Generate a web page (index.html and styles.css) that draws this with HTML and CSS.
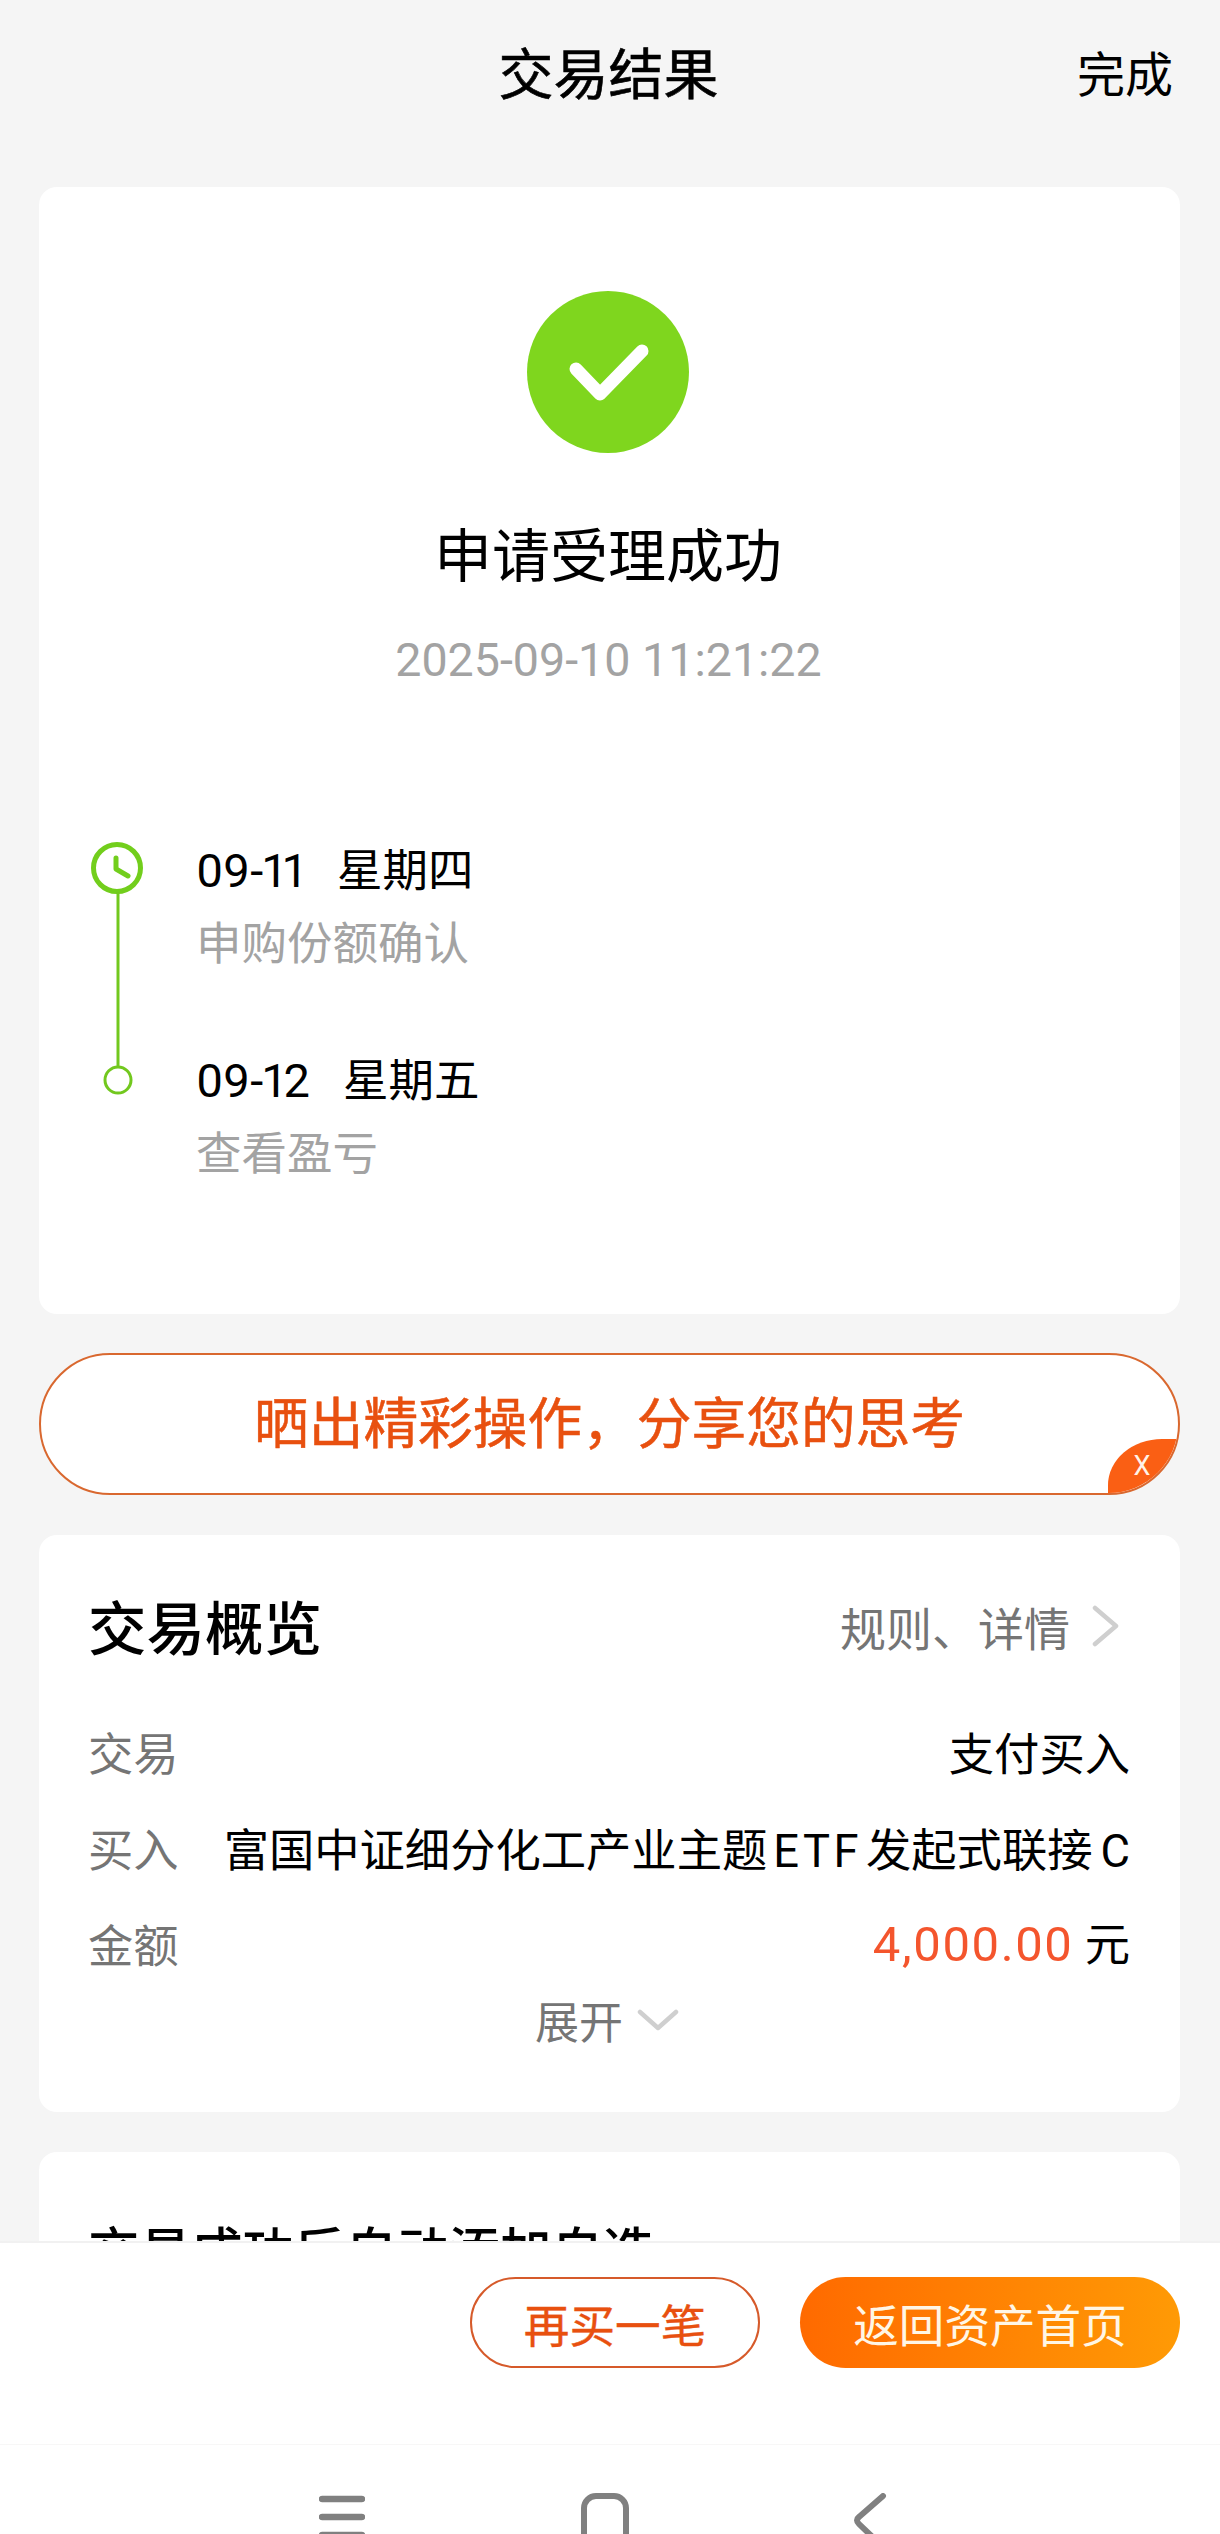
FILE: index.html
```html
<!DOCTYPE html>
<html lang="zh-CN">
<head>
    <meta charset="UTF-8">
    <title>交易结果</title>
    <link rel="stylesheet" href="styles.css">
</head>
<body>
    <div class="page">
        <header class="topbar">
            <span></span>
            <h1 class="topbar-title">交易结果</h1>
            <a class="topbar-done">完成</a>
        </header>

        <main class="content">
            <section class="card result">
                <svg class="result-icon" viewBox="0 0 162 162">
                    <circle cx="81" cy="81" r="81" fill="#7fd61e"/>
                    <path d="M49 78 L73 103 L115 60" fill="none" stroke="#fff" stroke-width="13" stroke-linecap="round" stroke-linejoin="round"/>
                </svg>
                <div class="result-title">申请受理成功</div>
                <div class="result-time">2025-09-10 11:21:22</div>

                <div class="timeline">
                    <svg class="timeline-rail" viewBox="0 0 56 256">
                        <circle cx="26" cy="28" r="23.5" fill="#fff" stroke="#72ce1c" stroke-width="5"/>
                        <path d="M25 18 V29 L37 36" fill="none" stroke="#72ce1c" stroke-width="5" stroke-linecap="round" stroke-linejoin="round"/>
                        <path d="M27 52 V226" stroke="#72c81e" stroke-width="3"/>
                        <circle cx="27" cy="240" r="13" fill="#fff" stroke="#72c81e" stroke-width="3"/>
                    </svg>
                    <div class="timeline-steps">
                        <div class="step">
                            <div class="step-date">09-11<span class="step-day">星期四</span></div>
                            <div class="step-text">申购份额确认</div>
                        </div>
                        <div class="step">
                            <div class="step-date">09-12<span class="step-day">星期五</span></div>
                            <div class="step-text">查看盈亏</div>
                        </div>
                    </div>
                </div>
            </section>

            <section class="share">
                <span class="share-text">晒出精彩操作，分享您的思考</span>
                <span class="share-close">X</span>
            </section>

            <section class="card overview">
                <div class="overview-head">
                    <h2 class="overview-title">交易概览</h2>
                    <a class="overview-link">规则、详情
                        <svg class="overview-arrow" viewBox="0 0 28 42">
                            <path d="M3 3 L24 21 L3 39" fill="none" stroke="#cfcfcf" stroke-width="4.5" stroke-linecap="round" stroke-linejoin="round"/>
                        </svg>
                    </a>
                </div>
                <div class="row">
                    <span class="row-label">交易</span>
                    <span class="row-value">支付买入</span>
                </div>
                <div class="row">
                    <span class="row-label">买入</span>
                    <span class="row-value">富国中证细分化工产业主题<span class="latin">ETF</span>发起式联接<span class="latin-end">C</span></span>
                </div>
                <div class="row">
                    <span class="row-label">金额</span>
                    <span class="row-value row-value-money"><span class="amount">4,000.00</span> 元</span>
                </div>
                <div class="expand">展开
                    <svg class="expand-arrow" viewBox="0 0 42 22">
                        <path d="M3 3 L21 19 L39 3" fill="none" stroke="#cfcfcf" stroke-width="4.5" stroke-linecap="round" stroke-linejoin="round"/>
                    </svg>
                </div>
            </section>

            <section class="card watch">
                <h2 class="watch-title">交易成功后自动添加自选</h2>
            </section>
        </main>

        <div class="bottom">
            <div class="actions">
                <a class="btn btn-plain">再买一笔</a>
                <a class="btn btn-fill">返回资产首页</a>
            </div>
            <nav class="sysnav">
                <svg class="sysnav-menu" viewBox="0 0 46 46">
                    <path d="M3 6 H43 M3 24 H43 M3 42 H43" stroke="#808080" stroke-width="6.5" stroke-linecap="round"/>
                </svg>
                <svg class="sysnav-home" viewBox="0 0 48 60">
                    <rect x="3" y="3" width="42" height="54" rx="12" fill="none" stroke="#808080" stroke-width="6"/>
                </svg>
                <svg class="sysnav-back" viewBox="0 0 34 60">
                    <path d="M30 3 L6 24 Q2 27 6 31 L30 54" fill="none" stroke="#808080" stroke-width="6" stroke-linecap="round"/>
                </svg>
            </nav>
        </div>
    </div>
</body>
</html>
```

FILE: styles.css
```css
* {
    box-sizing: border-box;
}
html, body {
    margin: 0;
    padding: 0;
}
body {
    background-color: #f5f5f5;
    font-family: Roboto, "Noto Sans CJK SC", sans-serif;
    color: #000;
}
h1, h2 {
    margin: 0;
    font-weight: 400;
}
.page {
    position: relative;
    width: 1220px;
    height: 2534px;
    overflow: hidden;
}

/* top bar */
.topbar {
    display: grid;
    grid-template-columns: 1fr auto 1fr;
    align-items: center;
    height: 150px;
    padding: 0 47px 0 39px;
    margin-bottom: 37px;
}
.topbar-title {
    padding-left: 5px;
    font-size: 55px;
    line-height: 150px;
    -webkit-text-stroke: 0.6px #000;
}
.topbar-done {
    justify-self: end;
    margin-top: -8px;
    font-size: 48px;
}

/* cards */
.content {
    padding: 0 40px 0 39px;
}
.card {
    background-color: #fff;
    border-radius: 18px;
}

/* result card */
.result {
    display: flex;
    flex-direction: column;
    align-items: center;
    height: 1127px;
    padding-top: 104px;
    margin-bottom: 39px;
}
.result-icon {
    width: 162px;
    height: 162px;
    margin-left: -3px;
}
.result-title {
    margin-top: 64px;
    margin-left: -3px;
    font-size: 58px;
    line-height: 80px;
}
.result-time {
    margin-top: 33px;
    margin-left: -2px;
    font-size: 46.6px;
    line-height: 60px;
    color: #a3a3a3;
}
.timeline {
    display: flex;
    align-self: stretch;
    margin-top: 146px;
    padding-left: 52px;
}
.timeline-rail {
    width: 56px;
    height: 256px;
    margin-top: 4px;
}
.timeline-steps {
    margin-left: 49px;
}
.step {
    height: 210px;
}
.step-date {
    font-size: 47px;
    line-height: 70px;
    font-variant-numeric: proportional-nums;
}
.step-day {
    margin-left: 33px;
    font-size: 45.5px;
}
.step-text {
    padding-top: 3px;
    font-size: 45.5px;
    line-height: 70px;
    color: #a3a3a3;
}

/* share banner */
.share {
    position: relative;
    display: flex;
    align-items: center;
    justify-content: center;
    height: 142px;
    margin-bottom: 40px;
    background-color: #fff;
    border: 2px solid #d9682f;
    border-radius: 71px;
    overflow: hidden;
}
.share-text {
    font-size: 54.7px;
    line-height: 72px;
    color: #e8500f;
    -webkit-text-stroke: 0.5px #e8500f;
}
.share-close {
    position: absolute;
    right: 0;
    bottom: 0;
    display: flex;
    align-items: center;
    justify-content: center;
    width: 70px;
    height: 54px;
    padding-right: 2px;
    background-color: #fa5f14;
    border-top-left-radius: 54px 46px;
    color: #fff3e8;
    font-size: 27px;
}

/* overview card */
.overview {
    height: 577px;
    padding: 57px 50px 0 49px;
    margin-bottom: 40px;
}
.overview-head {
    display: flex;
    align-items: center;
    justify-content: space-between;
    height: 64px;
    margin-bottom: 60px;
}
.overview-title {
    font-size: 58.5px;
    font-weight: 500;
}
.overview-link {
    display: flex;
    align-items: center;
    margin-top: 3px;
    font-size: 46px;
    color: #757575;
}
.overview-arrow {
    width: 28px;
    height: 42px;
    margin-left: 22px;
    margin-right: 10px;
}
.row {
    display: flex;
    align-items: center;
    justify-content: space-between;
    height: 70px;
    margin-bottom: 26px;
    font-size: 45.3px;
}
.row-label {
    color: #757575;
}
.row-value {
    white-space: nowrap;
}
.row-value-money {
    margin-bottom: 4px;
}
.latin {
    margin: 0 4px 0 6px;
    letter-spacing: 3.5px;
}
.latin-end {
    margin-left: 8px;
}
.amount {
    color: #f4552d;
    font-size: 49px;
    letter-spacing: 1.6px;
}
.expand {
    display: flex;
    align-items: center;
    justify-content: center;
    height: 60px;
    margin-top: -14px;
    padding-right: 4px;
    font-size: 44px;
    color: #757575;
}
.expand-arrow {
    width: 42px;
    height: 22px;
    margin-left: 14px;
}

/* card behind the bottom bar */
.watch {
    height: 500px;
    padding: 68px 50px 0 49px;
}
.watch-title {
    font-size: 51.5px;
    line-height: 66px;
    font-weight: 500;
}

/* bottom bar */
.bottom {
    position: absolute;
    left: 0;
    right: 0;
    top: 2241px;
    bottom: 0;
    background-color: #fff;
    border-top: 2px solid #f1f1f1;
    overflow: hidden;
}
.actions {
    display: flex;
    justify-content: flex-end;
    gap: 40px;
    height: 202px;
    padding: 34px 40px 0 0;
    border-bottom: 1px solid #f7f7f7;
}
.btn {
    display: flex;
    align-items: center;
    justify-content: center;
    height: 91px;
    border-radius: 46px;
    font-size: 45.6px;
}
.btn-plain {
    width: 290px;
    background-color: #fff;
    border: 2px solid #d65a2a;
    color: #e8500f;
    -webkit-text-stroke: 0.4px #e8500f;
}
.btn-fill {
    width: 380px;
    background: linear-gradient(90deg, #ff6a00, #ff9a05);
    color: #fff6e6;
}
.sysnav {
    position: relative;
    height: 90px;
}
.sysnav svg {
    position: absolute;
    top: 48px;
}
.sysnav-menu {
    left: 319px;
    width: 46px;
    height: 46px;
}
.sysnav-home {
    left: 581px;
    width: 48px;
    height: 60px;
}
.sysnav-back {
    left: 853px;
    width: 34px;
    height: 60px;
}
```
